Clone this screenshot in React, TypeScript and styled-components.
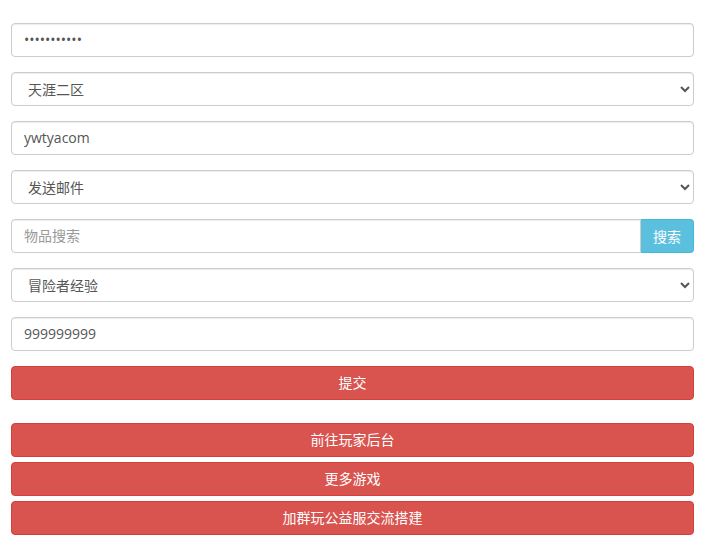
import React from 'react';
import styled, { createGlobalStyle } from 'styled-components';

const GlobalStyle = createGlobalStyle`
  html, body {
    margin: 0;
    padding: 0;
    background: #fff;
  }
  body {
    font-family: "Open Sans", "Noto Sans CJK SC", sans-serif;
    font-size: 14px;
    line-height: 1.42857;
    color: #333;
  }
  * { box-sizing: border-box; }
`;

const Page = styled.form`
  padding: 23px 12px 0 11px;
  display: flex;
  flex-direction: column;
`;

const FormGroup = styled.div`
  margin-bottom: 15px;
`;

const controlBase = `
  display: block;
  width: 100%;
  height: 34px;
  padding: 5px 12px 7px;
  font-family: "Open Sans", "Noto Sans CJK SC", sans-serif;
  font-size: 14px;
  line-height: 1.42857;
  color: #555;
  background: #fff;
  border: 1px solid #ccc;
  border-radius: 4px;
  box-shadow: inset 0 1px 1px rgba(0, 0, 0, .075);
  outline: none;
  &::placeholder { color: #999; }
`;

const Input = styled.input<{ $joined?: boolean }>`
  ${controlBase}
  ${p => p.$joined && `
    border-top-right-radius: 0;
    border-bottom-right-radius: 0;
  `}
`;

const Select = styled.select`
  ${controlBase}
  padding: 6px 12px;
`;

const InputGroup = styled.div`
  display: flex;
`;

const SearchButton = styled.button`
  flex: 0 0 auto;
  height: 34px;
  padding: 6px 12px;
  font-family: "Open Sans", "Noto Sans CJK SC", sans-serif;
  font-size: 14px;
  color: #fff;
  background: #5bc0de;
  border: 1px solid #46b8da;
  border-left: none;
  border-radius: 0 4px 4px 0;
`;

const DangerButton = styled.button<{ $gap?: number }>`
  display: block;
  width: 100%;
  height: 34px;
  margin-top: ${p => p.$gap ?? 0}px;
  padding: 6px 12px;
  font-family: "Open Sans", "Noto Sans CJK SC", sans-serif;
  font-size: 14px;
  line-height: 1.42857;
  color: #fff;
  background: #d9534f;
  border: 1px solid #d43f3a;
  border-radius: 4px;
  text-align: center;
`;

const App = () => {
  return (
    <>
      <GlobalStyle />
      <Page onSubmit={e => e.preventDefault()}>
        <FormGroup>
          <Input type="password" defaultValue="12345678901" />
        </FormGroup>
        <FormGroup>
          <Select defaultValue="2">
            <option value="1">天涯一区</option>
            <option value="2">天涯二区</option>
          </Select>
        </FormGroup>
        <FormGroup>
          <Input type="text" defaultValue="ywtyacom" />
        </FormGroup>
        <FormGroup>
          <Select defaultValue="mail">
            <option value="mail">发送邮件</option>
          </Select>
        </FormGroup>
        <FormGroup>
          <InputGroup>
            <Input $joined type="text" placeholder="物品搜索" />
            <SearchButton type="button">搜索</SearchButton>
          </InputGroup>
        </FormGroup>
        <FormGroup>
          <Select defaultValue="exp">
            <option value="exp">冒险者经验</option>
          </Select>
        </FormGroup>
        <FormGroup>
          <Input type="text" defaultValue="999999999" />
        </FormGroup>
        <DangerButton type="submit">提交</DangerButton>
        <DangerButton type="button" $gap={23}>前往玩家后台</DangerButton>
        <DangerButton type="button" $gap={5}>更多游戏</DangerButton>
        <DangerButton type="button" $gap={5}>加群玩公益服交流搭建</DangerButton>
      </Page>
    </>
  );
};

export default App;
